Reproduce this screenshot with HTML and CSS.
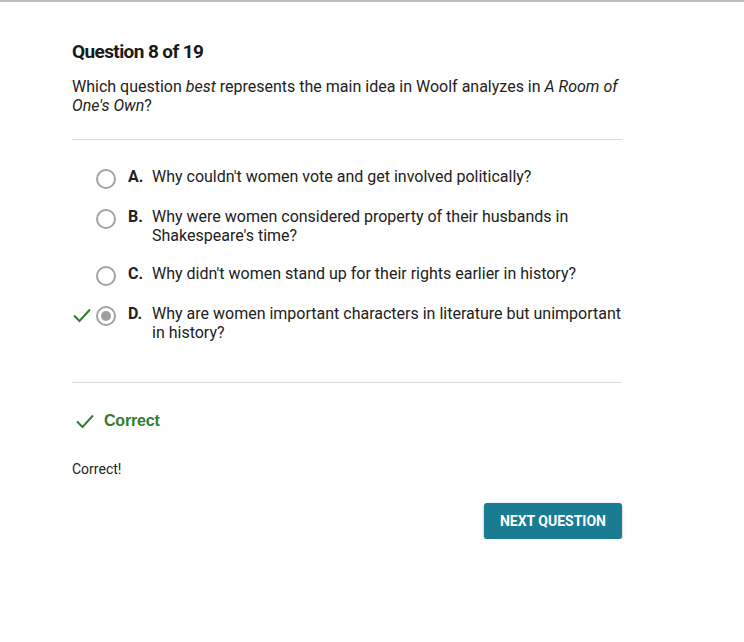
FILE: index.html
```html
<!DOCTYPE html>
<html>
<head>
<meta charset="utf-8">
<link rel="stylesheet" href="styles.css">
</head>
<body>
<div class="topline"></div>
<main class="quiz">
  <h1 class="title">Question 8 of 19</h1>
  <p class="prompt">Which question <em>best</em> represents the main idea in Woolf analyzes in <em>A Room of One's Own</em>?</p>
  <hr class="divider">
  <ul class="options">
    <li class="option">
      <span class="mark"></span>
      <span class="radio"></span>
      <span class="letter">A.</span>
      <span class="text">Why couldn't women vote and get involved politically?</span>
    </li>
    <li class="option">
      <span class="mark"></span>
      <span class="radio"></span>
      <span class="letter">B.</span>
      <span class="text">Why were women considered property of their husbands in Shakespeare's time?</span>
    </li>
    <li class="option after-wrap">
      <span class="mark"></span>
      <span class="radio"></span>
      <span class="letter">C.</span>
      <span class="text">Why didn't women stand up for their rights earlier in history?</span>
    </li>
    <li class="option">
      <span class="mark"><svg width="20" height="16" viewBox="0 0 20 16"><path d="M2 8.5 L7.5 14 L18 2.5" fill="none" stroke="#2e7d32" stroke-width="2"/></svg></span>
      <span class="radio selected"></span>
      <span class="letter">D.</span>
      <span class="text">Why are women important characters in literature but unimportant in history?</span>
    </li>
  </ul>
  <hr class="divider second">
  <div class="result">
    <svg width="20" height="16" viewBox="0 0 20 16"><path d="M2 8.5 L7.5 14 L18 2.5" fill="none" stroke="#2e7d32" stroke-width="2"/></svg>
    <span class="result-label">Correct</span>
  </div>
  <p class="feedback">Correct!</p>
  <div class="actions">
    <button class="next">NEXT QUESTION</button>
  </div>
</main>
</body>
</html>
```
FILE: styles.css
```css
html, body {
  margin: 0;
  padding: 0;
  background: #ffffff;
}
body {
  font-family: Roboto, "Liberation Sans", Arial, sans-serif;
  color: #212121;
}
.topline {
  height: 2px;
  background: #bdbdbd;
}
.quiz {
  width: 550px;
  margin-left: 72px;
  padding-top: 40px;
}
.title {
  margin: 0;
  font-size: 19px;
  line-height: 20px;
  font-weight: 700;
  letter-spacing: -0.6px;
  color: #1a1a1a;
}
.prompt {
  margin: 15px 0 0;
  font-size: 16px;
  line-height: 19px;
  color: #222;
}
.divider {
  border: 0;
  border-top: 1px solid #dcdcdc;
  margin: 24px 0 0;
}
.options {
  list-style: none;
  margin: 18px 0 0;
  padding: 0;
}
.option {
  display: flex;
  align-items: flex-start;
  padding: 9px 0;
  font-size: 16px;
  line-height: 19px;
}
.option.after-wrap {
  margin-top: 1px;
}
.mark {
  width: 24px;
  height: 22px;
  display: flex;
  align-items: center;
}
.radio {
  box-sizing: border-box;
  width: 20px;
  height: 20px;
  border: 2px solid #a3a3a3;
  border-radius: 50%;
  margin: 0 12px 0 0;
  position: relative;
  top: 2px;
}
.radio.selected::after {
  content: "";
  position: absolute;
  left: 3px;
  top: 3px;
  width: 10px;
  height: 10px;
  border-radius: 50%;
  background: #9e9e9e;
}
.letter {
  font-weight: 700;
  width: 24px;
  flex: none;
}
.text {
  flex: 1;
}
.divider.second {
  margin-top: 31px;
}
.result {
  display: flex;
  align-items: center;
  gap: 9px;
  margin-top: 29px;
  padding-left: 3px;
}
.result-label {
  font-family: "Liberation Sans", Arial, sans-serif;
  font-weight: 700;
  font-size: 16px;
  letter-spacing: -0.2px;
  color: #2e7d32;
}
.feedback {
  margin: 30px 0 0;
  font-size: 14px;
  line-height: 18px;
  color: #222;
}
.actions {
  display: flex;
  justify-content: flex-end;
  margin-top: 25px;
}
.next {
  font-family: Roboto, "Liberation Sans", sans-serif;
  font-weight: 700;
  font-size: 14px;
  color: #ffffff;
  background: #1a7c93;
  border: 0;
  border-radius: 3px;
  height: 36px;
  padding: 0 16px;
  box-shadow: 0 1px 3px rgba(0,0,0,0.3);
}
```
